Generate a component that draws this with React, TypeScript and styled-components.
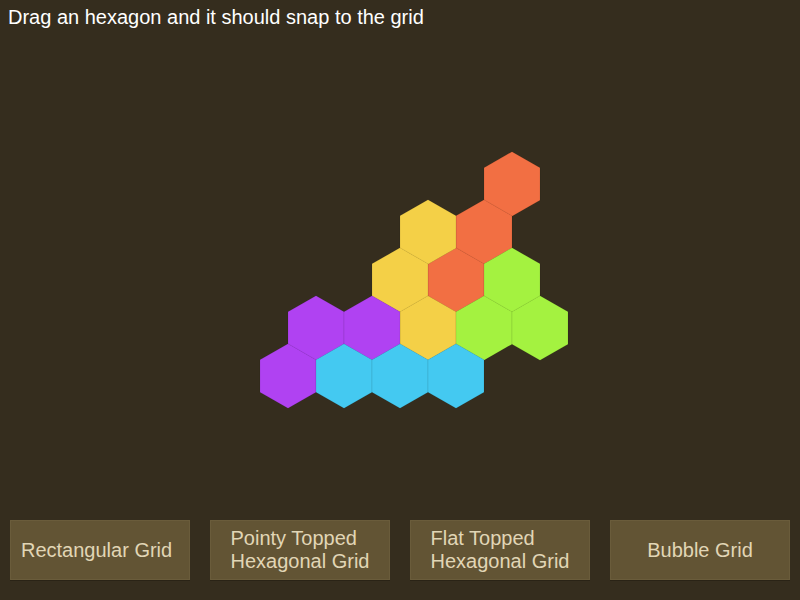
import styled, { createGlobalStyle } from 'styled-components'

const GlobalStyle = createGlobalStyle`
  html, body { margin: 0; padding: 0; background: #352d1e; }
  body { font-family: "Liberation Sans", Arial, sans-serif; }
`

type Hex = { x: number; y: number; color: string }

const COLORS = {
  orange: '#f26f43',
  yellow: '#f4d047',
  green: '#a4f240',
  purple: '#b042f2',
  blue: '#44c9f1',
}

// centres in page coordinates, pointy topped
const hexes: Hex[] = [
  { x: 512, y: 184, color: COLORS.orange },
  { x: 484, y: 232, color: COLORS.orange },
  { x: 456, y: 280, color: COLORS.orange },
  { x: 428, y: 232, color: COLORS.yellow },
  { x: 400, y: 280, color: COLORS.yellow },
  { x: 428, y: 328, color: COLORS.yellow },
  { x: 512, y: 280, color: COLORS.green },
  { x: 484, y: 328, color: COLORS.green },
  { x: 540, y: 328, color: COLORS.green },
  { x: 316, y: 328, color: COLORS.purple },
  { x: 372, y: 328, color: COLORS.purple },
  { x: 288, y: 376, color: COLORS.purple },
  { x: 344, y: 376, color: COLORS.blue },
  { x: 400, y: 376, color: COLORS.blue },
  { x: 456, y: 376, color: COLORS.blue },
]

const BOARD_TOP = 40
const R = 32.3
const HW = 28

function hexPoints(cx: number, cy: number) {
  const y = cy - BOARD_TOP
  return [
    [cx, y - R],
    [cx + HW, y - R / 2],
    [cx + HW, y + R / 2],
    [cx, y + R],
    [cx - HW, y + R / 2],
    [cx - HW, y - R / 2],
  ]
    .map((p) => p.join(','))
    .join(' ')
}

const buttons = [
  { lines: ['Rectangular Grid'], align: 'start' as const },
  { lines: ['Pointy Topped', 'Hexagonal Grid'], align: 'center' as const },
  { lines: ['Flat Topped', 'Hexagonal Grid'], align: 'center' as const },
  { lines: ['Bubble Grid'], align: 'center' as const },
]

export default function App() {
  return (
    <>
      <GlobalStyle />
      <Page>
        <Title>Drag an hexagon and it should snap to the grid</Title>
        <Board>
          <svg width="800" height="480" viewBox="0 0 800 480">
            {hexes.map((h, i) => (
              <polygon
                key={i}
                points={hexPoints(h.x, h.y)}
                fill={h.color}
                stroke="rgba(0,0,0,0.08)"
                strokeWidth={1}
              />
            ))}
          </svg>
        </Board>
        <ButtonRow>
          {buttons.map((b) => (
            <GridButton key={b.lines.join(' ')} $align={b.align}>
              <Label>
                {b.lines.map((line, i) => (
                  <Line key={i}>{line}</Line>
                ))}
              </Label>
            </GridButton>
          ))}
        </ButtonRow>
      </Page>
    </>
  )
}

const Page = styled.div`
  width: 800px;
  height: 600px;
  display: flex;
  flex-direction: column;
  overflow: hidden;
`

const Title = styled.div`
  height: 40px;
  box-sizing: border-box;
  padding: 6px 0 0 8px;
  font-size: 20px;
  line-height: 23px;
  color: #ffffff;
`

const Board = styled.div`
  height: 480px;
  svg { display: block; }
`

const ButtonRow = styled.div`
  display: grid;
  grid-template-columns: repeat(4, 180px);
  gap: 20px;
  padding: 0 10px;
  height: 80px;
`

const GridButton = styled.div<{ $align: 'start' | 'center' }>`
  height: 60px;
  box-sizing: border-box;
  padding: ${(p) => (p.$align === 'start' ? '0 0 0 10px' : '0 10px')};
  background: #625434;
  border: 1px solid #6a5c3b;
  box-shadow: 0 1px 0 #2a2316;
  display: flex;
  align-items: center;
  justify-content: ${(p) => (p.$align === 'start' ? 'flex-start' : 'center')};
  color: #e1d6b6;
  font-size: 20px;
  line-height: 23px;
`

const Label = styled.span`
  display: flex;
  flex-direction: column;
  align-items: flex-start;
  white-space: nowrap;
`

const Line = styled.span``
